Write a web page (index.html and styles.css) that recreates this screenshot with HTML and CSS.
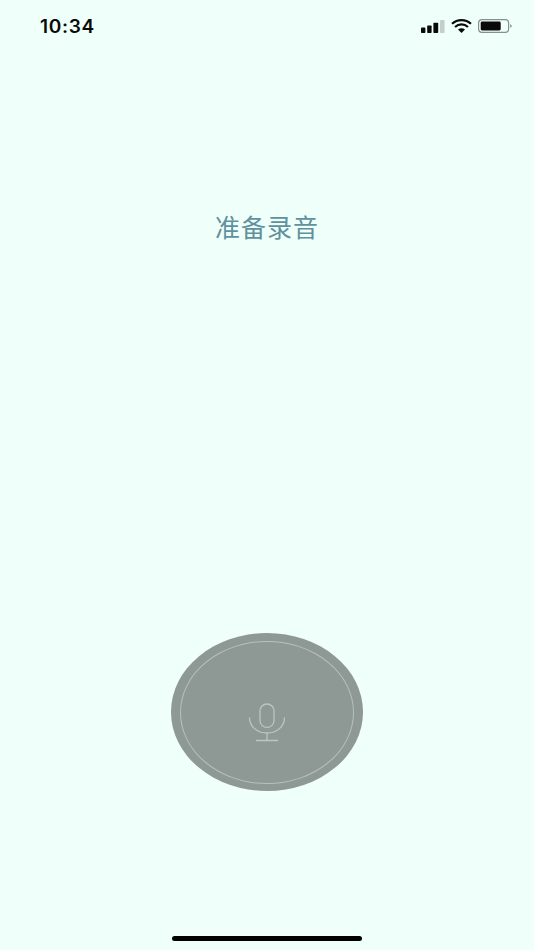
FILE: index.html
```html
<!DOCTYPE html>
<html lang="zh">
<head>
<meta charset="utf-8">
<title>准备录音</title>
<link rel="stylesheet" href="styles.css">
</head>
<body>
<div class="screen">
  <header class="status">
    <span class="time">10:34</span>
    <div class="status-icons">
      <svg class="signal" width="24" height="13" viewBox="0 0 24 13">
        <rect x="0" y="7.6" width="4.4" height="5.4" rx="0.8" fill="#0a0a0a"/>
        <rect x="6.2" y="5.4" width="4.4" height="7.6" rx="0.8" fill="#0a0a0a"/>
        <rect x="12.4" y="2.8" width="4.8" height="10.2" rx="0.8" fill="#0a0a0a"/>
        <rect x="19" y="0" width="4.6" height="13" rx="0.8" fill="#c4cfcb"/>
      </svg>
      <svg class="wifi" width="21" height="14" viewBox="0 0 21 14">
        <path d="M1 4.8C6.4 -.1 14.6 -.1 20 4.8M4 8C7.8 4.6 13.2 4.6 17 8" fill="none" stroke="#0a0a0a" stroke-width="2.2"/>
        <path d="M7 10.4C9.2 8.9 11.8 8.9 14 10.4L10.5 14Z" fill="#0a0a0a"/>
      </svg>
      <svg class="battery" width="34" height="14" viewBox="0 0 34 14">
        <rect x="0.6" y="0.6" width="30" height="12.8" rx="3.4" fill="none" stroke="#86918d" stroke-width="1.2"/>
        <rect x="2.7" y="2.6" width="20" height="8.8" rx="1.4" fill="#0a0a0a"/>
        <path d="M32.2 5.2C33.2 5.6 33.7 6.2 33.7 7S33.2 8.4 32.2 8.8Z" fill="#86918d"/>
      </svg>
    </div>
  </header>
  <main class="content">
    <h1 class="title">准备录音</h1>
    <button class="record" type="button" aria-label="录音">
      <span class="record-ring">
        <svg class="mic" width="38" height="40" viewBox="0 0 38 40">
          <rect x="12" y="1" width="14" height="23.4" rx="7" fill="none" stroke="#bcc6c2" stroke-width="1.3"/>
          <path d="M1.5 14.5C1.5 23.5 9 30 19 30S36.5 23.5 36.5 14.5M19 30V37.5M8 37.5H30" fill="none" stroke="#bcc6c2" stroke-width="1.3"/>
        </svg>
      </span>
    </button>
  </main>
  <div class="home-bar"></div>
</div>
</body>
</html>
```
FILE: styles.css
```css
* { box-sizing: border-box; }
html, body { margin: 0; padding: 0; }
body { background: #effffa; }
.screen {
  width: 534px;
  height: 950px;
  display: flex;
  flex-direction: column;
  align-items: center;
  overflow: hidden;
  background: #effffa;
}
.status {
  width: 100%;
  height: 50px;
  padding: 17px 22px 0 40px;
  display: flex;
  justify-content: space-between;
  align-items: flex-start;
}
.time {
  font-family: "Inter", "Liberation Sans", sans-serif;
  font-size: 18px;
  font-weight: 600;
  line-height: 20px;
  letter-spacing: 0.6px;
  color: #0a0a0a;
  transform: scaleX(1.06);
  transform-origin: left center;
}
.status-icons {
  display: flex;
  align-items: center;
  gap: 6px;
  padding-top: 2px;
}
.content {
  flex: 1;
  width: 100%;
  display: flex;
  flex-direction: column;
  align-items: center;
}
.title {
  margin: 160px 0 0;
  font-family: "Noto Sans CJK SC", sans-serif;
  font-size: 25px;
  font-weight: 400;
  line-height: 32px;
  letter-spacing: 1px;
  color: #5f919f;
}
.record {
  margin-top: 391px;
  width: 192px;
  height: 158px;
  padding: 8px 9px 7px;
  border: none;
  border-radius: 50%;
  background: #8e9894;
  display: flex;
}
.record-ring {
  flex: 1;
  border: 1px solid #b6c0bc;
  border-radius: 50%;
  display: flex;
  justify-content: center;
  padding-top: 61px;
}
.mic { display: block; }
.home-bar {
  width: 190px;
  height: 5px;
  margin-bottom: 9px;
  border-radius: 3px;
  background: #000;
}
```
